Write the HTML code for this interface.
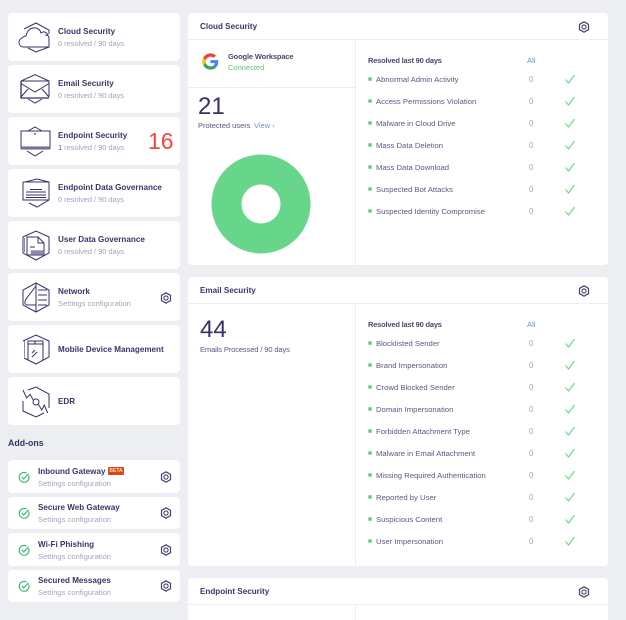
<!DOCTYPE html>
<html><head><meta charset="utf-8"><style>
html,body{margin:0;padding:0}
body{width:626px;height:620px;overflow:hidden;background:#edeef2;position:relative;font-family:"Liberation Sans",sans-serif;color:#35306a}
div,span,svg{position:absolute;white-space:nowrap}
.c{left:8px;width:172px;background:#fff;border-radius:4px}
.t{font-size:8.1px;font-weight:bold;color:#3a3568;line-height:12px;margin-top:1px}
.s{font-size:7.6px;color:#a5a3bd;line-height:12px;margin-top:1px}
.q{letter-spacing:-.1px}
.p{left:188px;width:420px;background:#fff;border-radius:4px}
.h{font-size:8.1px;font-weight:bold;color:#3a3568;line-height:12px;left:200px;margin-top:1px}
.l{background:#eceef1}
.r{font-size:7.7px;color:#5c5884;line-height:12px;left:376px;margin-top:1px}
.z{font-size:8px;color:#a5a3bd;line-height:12px;left:529px;margin-top:1px}
.d{left:368px;width:4px;height:4px;border-radius:50%;background:#68d68a}
.rh{font-size:7.5px;letter-spacing:-.2px;font-weight:bold;color:#4a4672;line-height:12px;left:368px;margin-top:1px}
.all{font-size:7.6px;color:#6f93cf;line-height:12px;left:527px;margin-top:1px}
.ck{left:564px;width:12px;height:12px;margin-top:-.5px}
svg{overflow:visible}
.ic{left:14px;width:40px;height:40px;fill:none;stroke:#35306a;stroke-width:1}
</style></head><body>
<svg width="0" height="0" style="left:0;top:0"><defs>
<g id="gear" fill="none" stroke="#45406f"><path d="M6 .8 10.500 3.400V8.600L6 11.200 1.500 8.600V3.400Z" stroke-width="1.200"/><circle cx="6" cy="6" r="2.100" stroke-width="1.100"/></g>
<path id="ok" d="M1.500 6.500 4.500 10 10.500 2" fill="none" stroke="#68d68a" stroke-width="1.100"/>
<g id="ok2" fill="none" stroke="#35b56a" stroke-width="1.100"><path d="M10.600 4.400A4.900 4.900 0 1 1 8.500 2.100"/><path d="M3.800 6 5.700 8 10.600 2.600"/></g>
</defs></svg>

<div class="c" style="top:13px;height:48px"></div>
<div class="c" style="top:65px;height:48px"></div>
<div class="c" style="top:117px;height:48px"></div>
<div class="c" style="top:169px;height:48px"></div>
<div class="c" style="top:221px;height:48px"></div>
<div class="c" style="top:273px;height:48px"></div>
<div class="c" style="top:325px;height:48px"></div>
<div class="c" style="top:377px;height:48px"></div>

<svg class="ic" style="top:17px" viewBox="0 0 40 40"><path d="M10 12 22 6 35 13V17M35 27V30L22 35 14 31"/><path d="M9 30A4.700 4.700 0 0 1 8 21Q10 19 12 19Q14 10 22 11Q26 12 27 16Q31 13 34 18"/><path d="M9 30H35V21Q35 18 31 18"/></svg>
<svg class="ic" style="top:69px" viewBox="0 0 40 40"><path d="M7 12 21 5.700 35 12V28M14 30 21 34 28 30"/><path d="M7 12H35"/><path d="M7 12V29H35" stroke-width="1.300"/><path d="M7 14.500 21 23 35 14.500M7 28 14 20M35 28 28 20"/></svg>
<svg class="ic" style="top:121px" viewBox="0 0 40 40"><path d="M14 10 21 6 28 10M13 30 21 35 29 30"/><path d="M7 26V10H36V26"/><path d="M7 26H36V28H7Z" fill="#8d8ab0" stroke="#5d5990"/><circle cx="21" cy="13" r=".4"/></svg>
<svg class="ic" style="top:173px" viewBox="0 0 40 40"><path d="M11 9 23 6 35 9V27L23 34 15 30"/><path d="M9 9H35M9 9V27H35"/><path d="M12 19H32M12 22H32M12 24.500H32M16 16.500H28" stroke-width=".9"/></svg>
<svg class="ic" style="top:225px" viewBox="0 0 40 40"><path d="M9 12 22 6 35 12V28L22 35 9 28Z"/><path d="M10.500 13V27" stroke="#8d8ab0"/><path d="M13 12H24L30 18V30H13Z"/><path d="M24 12V18H30M16 22H21"/><path d="M17 25.500H29V29.500H17Z" fill="#8d8ab0" stroke="#8d8ab0" stroke-width=".5"/></svg>
<svg class="ic" style="top:277px" viewBox="0 0 40 40"><path d="M22 6 35 13V28L22 35 9 28V13Z"/><path d="M22 6V35"/><path d="M22 9 12 22Q9 28 14 28H22"/><path d="M24 13H33M24 18H33M24 23H33M24 28H33"/></svg>
<svg class="ic" style="top:329px" viewBox="0 0 40 40"><path d="M9 12 22 6 35 12V28L22 35 10 29"/><path d="M10.500 12V28" stroke="#8d8ab0"/><path d="M14 31V12H29V31M14 15H29M21 12V15M18 24 21 21M18 28 23 23" /></svg>
<svg class="ic" style="top:381px" viewBox="0 0 40 40"><path d="M14 9 22 6 35 13V27M9 20V30L22 36 30 32"/><path d="M9 9 12.700 17 16 13.300 19.300 19"/><circle cx="22" cy="21" r="3"/><path d="M24.500 23.500 27.700 29 30.300 24 33.700 32"/></svg>

<div class="t" style="left:58px;top:25px">Cloud Security</div><div class="s q" style="left:58px;top:37px">0 resolved / 90 days</div>
<div class="t" style="left:58px;top:77px">Email Security</div><div class="s q" style="left:58px;top:89px">0 resolved / 90 days</div>
<div class="t" style="left:58px;top:129px">Endpoint Security</div><div class="s q" style="left:58px;top:141px"><span style="position:static;color:#5c5884">1</span> resolved / 90 days</div>
<div style="left:148px;top:127px;font-size:23px;line-height:28px;color:#f0483e">16</div>
<div class="t" style="left:58px;top:181px">Endpoint Data Governance</div><div class="s q" style="left:58px;top:193px">0 resolved / 90 days</div>
<div class="t" style="left:58px;top:233px">User Data Governance</div><div class="s q" style="left:58px;top:245px">0 resolved / 90 days</div>
<div class="t" style="left:58px;top:285px">Network</div><div class="s" style="left:58px;top:297px">Settings configuration</div>
<svg style="left:160px;top:292px" width="12" height="12"><use href="#gear"/></svg>
<div class="t" style="left:58px;top:343px">Mobile Device Management</div>
<div class="t" style="left:58px;top:395px">EDR</div>

<div style="left:8px;top:437px;font-size:8.800px;font-weight:bold;color:#3a3568;line-height:12px">Add-ons</div>
<div class="c" style="top:460px;height:33px"></div>
<div class="c" style="top:497px;height:32px"></div>
<div class="c" style="top:533px;height:33px"></div>
<div class="c" style="top:570px;height:32px"></div>

<svg style="left:18px;top:471px" width="12" height="12"><use href="#ok2"/></svg>
<svg style="left:18px;top:507px" width="12" height="12"><use href="#ok2"/></svg>
<svg style="left:18px;top:544px" width="12" height="12"><use href="#ok2"/></svg>
<svg style="left:18px;top:580px" width="12" height="12"><use href="#ok2"/></svg>

<div class="t" style="left:38px;top:465px">Inbound Gateway</div>
<div style="left:108px;top:467px;width:16px;height:8px;background:#d9480f;border-radius:1px;color:#ffd9c7;font-size:5px;line-height:8px;text-align:center;font-weight:bold">BETA</div>
<div class="s" style="left:38px;top:477px">Settings configuration</div>
<div class="t" style="left:38px;top:501px">Secure Web Gateway</div><div class="s" style="left:38px;top:513px">Settings configuration</div>
<div class="t" style="left:38px;top:538px">Wi-Fi Phishing</div><div class="s" style="left:38px;top:550px">Settings configuration</div>
<div class="t" style="left:38px;top:574px">Secured Messages</div><div class="s" style="left:38px;top:586px">Settings configuration</div>
<svg style="left:160px;top:471px" width="12" height="12"><use href="#gear"/></svg>
<svg style="left:160px;top:507px" width="12" height="12"><use href="#gear"/></svg>
<svg style="left:160px;top:544px" width="12" height="12"><use href="#gear"/></svg>
<svg style="left:160px;top:580px" width="12" height="12"><use href="#gear"/></svg>

<div class="p" style="top:13px;height:252px"></div>
<div class="l" style="left:188px;top:39px;width:420px;height:1px"></div>
<div class="l" style="left:355px;top:40px;width:1px;height:225px"></div>
<div class="l" style="left:188px;top:87px;width:167px;height:1px"></div>
<div class="h" style="top:20px">Cloud Security</div>
<svg style="left:578px;top:21px" width="12" height="12"><use href="#gear"/></svg>
<svg style="left:202px;top:53px" width="17" height="17" viewBox="0 0 48 48"><path fill="#4285f4" d="M46 24.500c0-1.600-.1-3.100-.4-4.500H24v8.500h12.400c-.5 2.900-2.100 5.300-4.600 7v5.800h7.400C43.500 37.800 46 31.700 46 24.500z"/><path fill="#34a853" d="M24 47c6.200 0 11.400-2 15.200-5.600l-7.400-5.800c-2 1.400-4.700 2.200-7.800 2.200-6 0-11.100-4-12.900-9.500H3.500v6C7.300 41.800 15 47 24 47z"/><path fill="#fbbc05" d="M11.100 28.300c-.5-1.400-.7-2.800-.7-4.300s.3-3 .7-4.300v-6H3.500C2 16.700 1 20.200 1 24s.9 7.300 2.500 10.300z"/><path fill="#ea4335" d="M24 10.200c3.400 0 6.400 1.200 8.800 3.400l6.600-6.600C35.400 3.300 30.200 1 24 1 15 1 7.300 6.200 3.500 13.700l7.600 6C12.900 14.200 18 10.200 24 10.200z"/></svg>
<div style="left:228px;top:51px;font-size:7.500px;letter-spacing:-.15px;font-weight:bold;color:#4a4672;line-height:12px">Google Workspace</div>
<div style="left:228px;top:62px;font-size:7.500px;color:#57c878;line-height:12px">Connected</div>
<div style="left:198px;top:93px;font-size:24px;line-height:28px;color:#35306a">21</div>
<div style="left:198px;top:120px;font-size:7.500px;color:#5c5884;line-height:12px">Protected users</div>
<div style="left:254px;top:120px;font-size:7.500px;color:#6f93cf;line-height:12px">View ›</div>
<svg style="left:211px;top:154px" width="100" height="100"><circle cx="50" cy="50" r="34.500" fill="none" stroke="#68d68a" stroke-width="30"/></svg>

<div class="rh" style="top:54px">Resolved last 90 days</div><div class="all" style="top:54px">All</div>
<div class="d" style="top:77px"></div><div class="r" style="top:73px">Abnormal Admin Activity</div><div class="z" style="top:73px">0</div><svg class="ck" style="top:73px"><use href="#ok"/></svg>
<div class="d" style="top:99px"></div><div class="r" style="top:95px">Access Permissions Violation</div><div class="z" style="top:95px">0</div><svg class="ck" style="top:95px"><use href="#ok"/></svg>
<div class="d" style="top:121px"></div><div class="r" style="top:117px">Malware in Cloud Drive</div><div class="z" style="top:117px">0</div><svg class="ck" style="top:117px"><use href="#ok"/></svg>
<div class="d" style="top:143px"></div><div class="r" style="top:139px">Mass Data Deletion</div><div class="z" style="top:139px">0</div><svg class="ck" style="top:139px"><use href="#ok"/></svg>
<div class="d" style="top:165px"></div><div class="r" style="top:161px">Mass Data Download</div><div class="z" style="top:161px">0</div><svg class="ck" style="top:161px"><use href="#ok"/></svg>
<div class="d" style="top:187px"></div><div class="r" style="top:183px">Suspected Bot Attacks</div><div class="z" style="top:183px">0</div><svg class="ck" style="top:183px"><use href="#ok"/></svg>
<div class="d" style="top:209px"></div><div class="r" style="top:205px">Suspected Identity Compromise</div><div class="z" style="top:205px">0</div><svg class="ck" style="top:205px"><use href="#ok"/></svg>

<div class="p" style="top:277px;height:289px"></div>
<div class="l" style="left:188px;top:303px;width:420px;height:1px"></div>
<div class="l" style="left:355px;top:304px;width:1px;height:262px"></div>
<div class="h" style="top:284px">Email Security</div>
<svg style="left:578px;top:285px" width="12" height="12"><use href="#gear"/></svg>
<div style="left:200px;top:316px;font-size:24px;line-height:28px;color:#35306a">44</div>
<div style="left:200px;top:344px;font-size:7.600px;letter-spacing:-.15px;color:#5c5884;line-height:12px">Emails Processed / 90 days</div>

<div class="rh" style="top:318px">Resolved last 90 days</div><div class="all" style="top:318px">All</div>
<div class="d" style="top:341px"></div><div class="r" style="top:337px">Blocklisted Sender</div><div class="z" style="top:337px">0</div><svg class="ck" style="top:337px"><use href="#ok"/></svg>
<div class="d" style="top:363px"></div><div class="r" style="top:359px">Brand Impersonation</div><div class="z" style="top:359px">0</div><svg class="ck" style="top:359px"><use href="#ok"/></svg>
<div class="d" style="top:385px"></div><div class="r" style="top:381px">Crowd Blocked Sender</div><div class="z" style="top:381px">0</div><svg class="ck" style="top:381px"><use href="#ok"/></svg>
<div class="d" style="top:407px"></div><div class="r" style="top:403px">Domain Impersonation</div><div class="z" style="top:403px">0</div><svg class="ck" style="top:403px"><use href="#ok"/></svg>
<div class="d" style="top:429px"></div><div class="r" style="top:425px">Forbidden Attachment Type</div><div class="z" style="top:425px">0</div><svg class="ck" style="top:425px"><use href="#ok"/></svg>
<div class="d" style="top:451px"></div><div class="r" style="top:447px">Malware in Email Attachment</div><div class="z" style="top:447px">0</div><svg class="ck" style="top:447px"><use href="#ok"/></svg>
<div class="d" style="top:473px"></div><div class="r" style="top:469px">Missing Required Authentication</div><div class="z" style="top:469px">0</div><svg class="ck" style="top:469px"><use href="#ok"/></svg>
<div class="d" style="top:495px"></div><div class="r" style="top:491px">Reported by User</div><div class="z" style="top:491px">0</div><svg class="ck" style="top:491px"><use href="#ok"/></svg>
<div class="d" style="top:517px"></div><div class="r" style="top:513px">Suspicious Content</div><div class="z" style="top:513px">0</div><svg class="ck" style="top:513px"><use href="#ok"/></svg>
<div class="d" style="top:539px"></div><div class="r" style="top:535px">User Impersonation</div><div class="z" style="top:535px">0</div><svg class="ck" style="top:535px"><use href="#ok"/></svg>

<div class="p" style="top:578px;height:42px;border-radius:4px 4px 0 0"></div>
<div class="l" style="left:188px;top:604px;width:420px;height:1px"></div>
<div class="l" style="left:355px;top:605px;width:1px;height:15px"></div>
<div class="h" style="top:585px">Endpoint Security</div>
<svg style="left:578px;top:586px" width="12" height="12"><use href="#gear"/></svg>
</body></html>
